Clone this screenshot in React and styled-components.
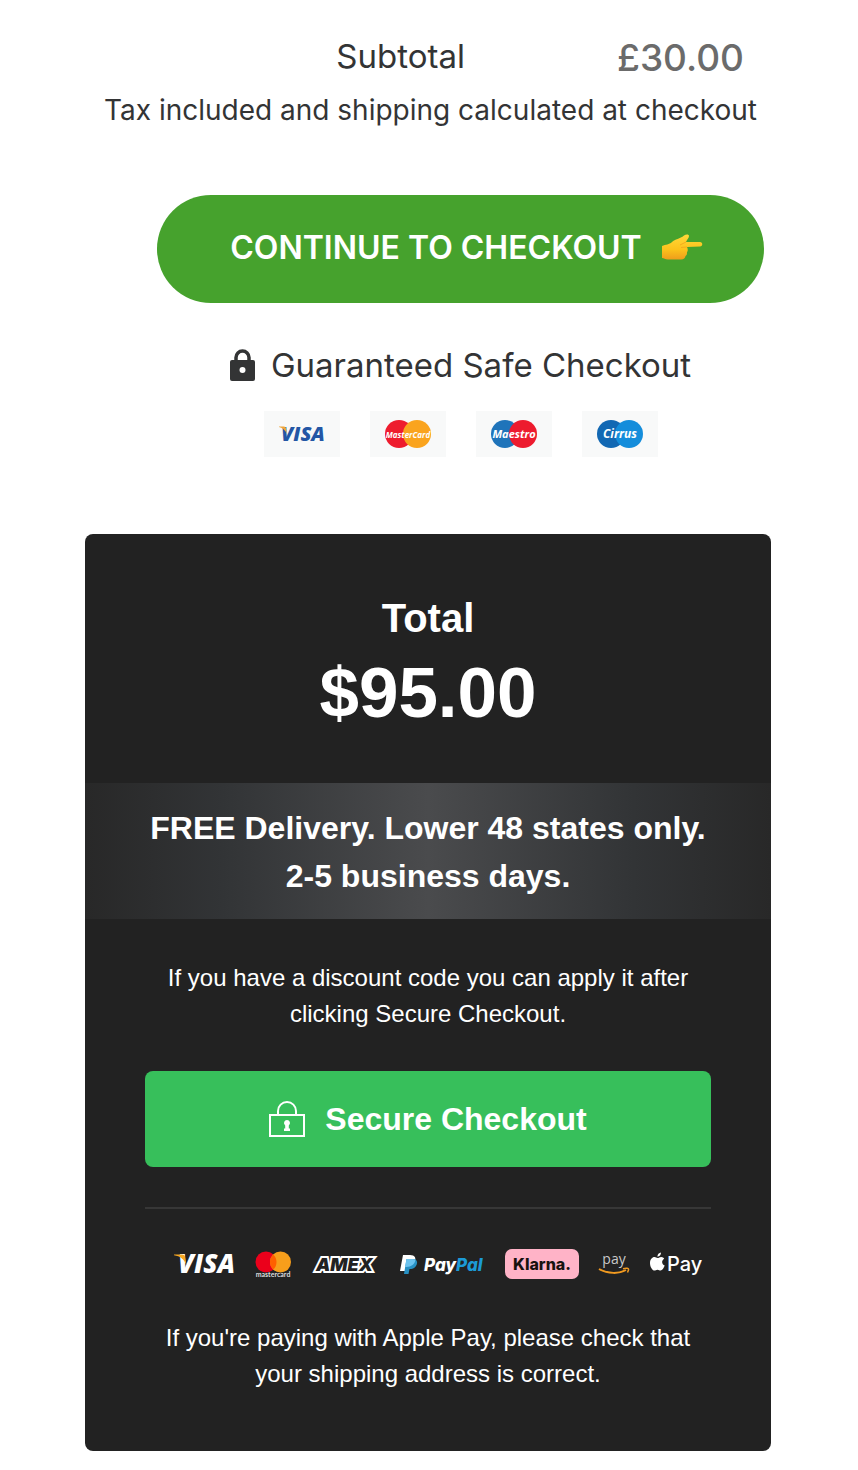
import React from "react";
import styled, { createGlobalStyle } from "styled-components";

const GlobalStyle = createGlobalStyle`
  *, *::before, *::after { box-sizing: border-box; }
  body {
    margin: 0;
    background: #fff;
    font-family: "Liberation Sans", Arial, sans-serif;
  }
  p, h2, dl, dd, dt, ul { margin: 0; padding: 0; }
  button { border: 0; font: inherit; cursor: pointer; }
  svg { display: block; flex: none; overflow: visible; }
`;

const Page = styled.main`
  padding: 32px 87px 19px 85px;
`;

const Cart = styled.section`
  display: flex;
  flex-direction: column;
  padding: 0 7px 0 12px;
  color: #333435;
  font-family: Inter, Montserrat, sans-serif;
`;

const SubtotalRow = styled.dl`
  display: flex;
  justify-content: flex-end;
  align-items: center;
  padding-right: 20px;
  line-height: 52px;
`;

const SubtotalLabel = styled.dt`
  margin-right: 152px;
  padding-bottom: 4px;
  font-size: 33px;
  line-height: 48px;
`;

const SubtotalValue = styled.dd`
  color: #6b6b6b;
  font-size: 37px;
  font-weight: 500;
`;

const TaxNote = styled.p`
  font-size: 28px;
  line-height: 52px;
  text-align: center;
`;

const ContinueButton = styled.button`
  display: flex;
  justify-content: center;
  align-items: center;
  gap: 20px;
  height: 108px;
  margin: 59px 0 0 60px;
  padding: 0 4px 4px 16px;
  border-radius: 54px;
  background: #46a22d;
  color: #fff;
  font-size: 32px;
  font-weight: 600;
`;

const SafeCheckout = styled.p`
  display: flex;
  justify-content: center;
  align-items: center;
  gap: 16px;
  margin: 38px 0 0 60px;
  font-size: 33px;
  line-height: 48px;
`;

const AcceptedCards = styled.ul`
  display: flex;
  justify-content: center;
  gap: 30px;
  margin: 22px 0 0 60px;
  list-style: none;
`;

const AcceptedCard = styled.li`
  display: flex;
  justify-content: center;
  align-items: center;
  width: 76px;
  height: 46px;
  background: #f8f9f9;
`;

const Summary = styled.section`
  margin-top: 77px;
  padding: 60px 0;
  border-radius: 8px;
  background: #222;
  color: #fff;
  text-align: center;
`;

const TotalTitle = styled.h2`
  font-size: 40px;
  line-height: 48px;
`;

const TotalPrice = styled.p`
  font-size: 71px;
  font-weight: 700;
  line-height: 101px;
`;

const DeliveryBand = styled.p`
  margin-top: 40px;
  padding: 21px 20px 19px;
  background: linear-gradient(90deg, #282828 0%, #323436 20%, #4a4b4d 50%, #323436 80%, #282828 100%);
  font-size: 32px;
  font-weight: 700;
  line-height: 48px;
`;

const SummaryBody = styled.div`
  display: flex;
  flex-direction: column;
  gap: 40px;
  padding: 40px 60px 0;
`;

const Note = styled.p`
  padding-top: 1px;
  margin-bottom: -1px;
  font-size: 24px;
  line-height: 36px;
`;

const SecureButton = styled.button`
  display: flex;
  justify-content: center;
  align-items: center;
  gap: 20px;
  height: 96px;
  border-radius: 8px;
  background: #37bf5b;
  color: #fff;
  font-size: 32px;
  font-weight: 700;
`;

const Divider = styled.hr`
  width: 100%;
  height: 2px;
  margin: 0;
  border: 0;
  background: #373737;
`;

const PaymentLogos = styled.ul`
  display: flex;
  justify-content: center;
  align-items: center;
  gap: 20px;
  height: 30px;
  padding-left: 20px;
  list-style: none;
`;

const Wordmark = styled.text`
  font-family: ${(p) => p.$family || '"Open Sans"'}, sans-serif;
  font-size: ${(p) => p.$size}px;
  font-weight: ${(p) => p.$weight || 700};
  font-style: ${(p) => (p.$italic ? "italic" : "normal")};
`;

function PointingHand() {
  return (
    <svg width="41" height="26" viewBox="0 0 41 26" aria-hidden="true">
      <defs>
        <linearGradient id="hand" x1="0" y1="0" x2="0" y2="1">
          <stop offset="0" stopColor="#ffd83a" />
          <stop offset="0.6" stopColor="#fcc21b" />
          <stop offset="1" stopColor="#ee9d1c" />
        </linearGradient>
      </defs>
      <path
        fill="url(#hand)"
        d="M0 12C4 10 7 11 10 8C13 5 18 5 22 1.500C24 0 27 0 27 2C27 4 25 5.500 24 8L38 8C41 8 41 12.500 38 12.500L25 13C26 15 26 17 25 18C25 20 25 21 23.500 22C23 24 22 25.500 19 25.500L6 25.500C3 25.500 2 24 0 24Z"
      />
      <path fill="none" stroke="#f3ab1e" strokeWidth="1" d="M24 8L18 11M25 13L19 13.500" />
    </svg>
  );
}

function SolidLock() {
  return (
    <svg width="25" height="32" viewBox="0 0 25 32" aria-hidden="true">
      <path fill="none" stroke="#333435" strokeWidth="3.500" d="M6 13V8.500a6.500 6.500 0 0 1 13 0V13" />
      <rect y="11" width="25" height="21" rx="2" fill="#333435" />
      <circle cx="12.500" cy="21" r="3" fill="#fff" />
    </svg>
  );
}

function OutlineLock() {
  return (
    <svg width="36" height="36" viewBox="0 0 36 36" aria-hidden="true">
      <g fill="none" stroke="#fff" strokeWidth="2">
        <rect x="1" y="14" width="34" height="21" />
        <path d="M9 14V10a9 9 0 0 1 18 0v4" />
      </g>
      <path fill="#fff" d="M18 19a3 3 0 0 1 1.800 5.400V27.500h1.200v2.500h-6v-2.500h1.200v-3.100A3 3 0 0 1 18 19Z" />
    </svg>
  );
}

function VisaSmall() {
  return (
    <svg width="46" height="30" viewBox="0 -5 46 30">
      <Wordmark x="2" y="17" $size={20} $weight={800} $italic fill="#2356a5">VISA</Wordmark>
      <path fill="#efa63b" d="M0 2.500H5Q6.500 2.500 7 4L8 10C6 6 4 4 0 3Z" />
    </svg>
  );
}

function TwinCircles({ left, right, label, size }) {
  return (
    <svg width="48" height="28" viewBox="0 0 48 28">
      <circle cx="15" cy="14" r="14" fill={left} />
      <circle cx="33" cy="14" r="14" fill={right} />
      <Wordmark x="24" y="18" $size={size} $italic textAnchor="middle" fill="#fff">{label}</Wordmark>
    </svg>
  );
}

function VisaLogo() {
  return (
    <svg width="61" height="38" viewBox="0 -8 61 38">
      <Wordmark x="4" y="20" $size={26} $weight={800} $italic fill="#fff">VISA</Wordmark>
      <path fill="#f7a823" d="M0 1.500H8Q10.500 1.500 11 3.500L12.500 12C10 6 6 3 0 2.200Z" />
    </svg>
  );
}

function MastercardLogo() {
  return (
    <svg width="37" height="28" viewBox="0 0 37 28">
      <circle cx="11" cy="12" r="10.500" fill="#eb001b" />
      <circle cx="25.500" cy="12" r="10.500" fill="#f79e1b" />
      <path fill="#ff5f00" d="M18.250 4.400a10.500 10.500 0 0 1 0 15.200a10.500 10.500 0 0 1 0-15.200Z" />
      <Wordmark x="18" y="27" $family="Lato" $size={7} textAnchor="middle" fill="#ddd">mastercard</Wordmark>
    </svg>
  );
}

function AmexLogo() {
  return (
    <svg width="67" height="20" viewBox="0 0 67 20">
      <Wordmark x="4" y="17" $family="Inter" $size={18} $weight={900} $italic fill="#fff" stroke="#fff" strokeWidth="4">AMEX</Wordmark>
      <Wordmark x="4" y="17" $family="Inter" $size={18} $weight={900} $italic fill="#222">AMEX</Wordmark>
    </svg>
  );
}

function PayPalLogo() {
  return (
    <svg width="86" height="24" viewBox="0 0 86 24">
      <path fill="#fff" d="M4 3H11C16 3 17.500 6 15.500 10C14 14 11 15 7.500 15L6 19H1Z" />
      <path fill="#2790c3" d="M7.500 7H14C18.500 7 19 11 17 14C15.500 16.500 13 17 10.500 17L9.500 22H5Z" />
      <path fill="#6bc2ee" d="M7.500 7H14C15 7 16 7.200 16.500 7.600C16 12.500 12 15 7.500 15H6Z" />
      <Wordmark x="25" y="19" $family="Inter" $size={17} $weight={800} $italic fill="#fff">
        Pay<tspan fill="#1c9ad6">Pal</tspan>
      </Wordmark>
    </svg>
  );
}

function KlarnaLogo() {
  return (
    <svg width="74" height="30" viewBox="0 0 74 30">
      <rect width="74" height="30" rx="7" fill="#ffb3c7" />
      <Wordmark x="37" y="21" $family="Inter" $size={16} $weight={800} textAnchor="middle" fill="#17120f">Klarna.</Wordmark>
    </svg>
  );
}

function AmazonPayLogo() {
  return (
    <svg width="31" height="30" viewBox="0 -3 31 30">
      <Wordmark x="15" y="12" $size={14} $weight={500} textAnchor="middle" fill="#c9c9c9">pay</Wordmark>
      <path fill="none" stroke="#f19a20" strokeWidth="2" d="M0 17C9 22 20 22 27 18" />
      <path fill="none" stroke="#f19a20" strokeWidth="1.500" d="M24 16.700C27 16 30 16 29.500 18L28.500 20.500" />
    </svg>
  );
}

function ApplePayLogo() {
  return (
    <svg width="53" height="26" viewBox="0 0 53 26">
      <g fill="#fff">
        <path d="M7.500 7.100C9 7.100 9.500 6 11.200 6C12.700 6 13.500 6.800 14.200 7.700C11.200 9.500 11.600 13.200 14.700 14.500C13.800 17 12.200 19.500 10.600 19.500C9.300 19.500 9 18.700 7.500 18.700C6 18.700 5.600 19.500 4.400 19.500C2.500 19.500 0 15.800 0 12.200C0 8.500 2.200 6.100 4.500 6.100C5.800 6.100 6.600 7.100 7.500 7.100Z" />
        <path d="M7.400 5.700C7.300 3.500 9.100 1.600 11 1.500C11.200 3.700 9.300 5.700 7.400 5.700Z" />
      </g>
      <Wordmark x="17" y="20" $family="Inter" $size={20} $weight={500} fill="#fff">Pay</Wordmark>
    </svg>
  );
}

const LOGOS = [VisaLogo, MastercardLogo, AmexLogo, PayPalLogo, KlarnaLogo, AmazonPayLogo, ApplePayLogo];

export default function App() {
  return (
    <>
      <GlobalStyle />
      <Page>
        <Cart>
          <SubtotalRow>
            <SubtotalLabel>Subtotal</SubtotalLabel>
            <SubtotalValue>£30.00</SubtotalValue>
          </SubtotalRow>
          <TaxNote>Tax included and shipping calculated at checkout</TaxNote>
          <ContinueButton type="button">
            CONTINUE TO CHECKOUT
            <PointingHand />
          </ContinueButton>
          <SafeCheckout>
            <SolidLock />
            Guaranteed Safe Checkout
          </SafeCheckout>
          <AcceptedCards>
            <AcceptedCard><VisaSmall /></AcceptedCard>
            <AcceptedCard><TwinCircles left="#ee1c2e" right="#faa41e" label="MasterCard" size={8} /></AcceptedCard>
            <AcceptedCard><TwinCircles left="#1f74ba" right="#ed1b2e" label="Maestro" size={11} /></AcceptedCard>
            <AcceptedCard><TwinCircles left="#1268b3" right="#148ddb" label="Cirrus" size={12} /></AcceptedCard>
          </AcceptedCards>
        </Cart>

        <Summary>
          <TotalTitle>Total</TotalTitle>
          <TotalPrice>$95.00</TotalPrice>
          <DeliveryBand>
            FREE Delivery. Lower 48 states only.
            <br />
            2-5 business days.
          </DeliveryBand>
          <SummaryBody>
            <Note>
              If you have a discount code you can apply it after
              <br />
              clicking Secure Checkout.
            </Note>
            <SecureButton type="button">
              <OutlineLock />
              Secure Checkout
            </SecureButton>
            <Divider />
            <PaymentLogos>
              {LOGOS.map((Logo) => (
                <li key={Logo.name}><Logo /></li>
              ))}
            </PaymentLogos>
            <Note>
              If you're paying with Apple Pay, please check that
              <br />
              your shipping address is correct.
            </Note>
          </SummaryBody>
        </Summary>
      </Page>
    </>
  );
}
